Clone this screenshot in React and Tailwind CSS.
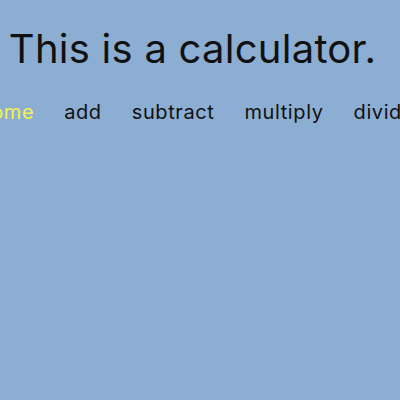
import React from 'react';

const links = ['home', 'add', 'subtract', 'multiply', 'divide'];

const App = () => (
    <div className="min-h-screen w-full overflow-hidden bg-[#8daed3] pr-[15px] font-['Inter',sans-serif] text-[#111]">
        <h1 className="pt-[24px] text-center text-[40px] leading-[50px] tracking-[0.25px] font-normal">
            This is a calculator.
        </h1>
        <nav className="mt-[26px] flex justify-center gap-[30px] whitespace-nowrap pl-[8px] text-[20px] leading-[24px] tracking-[0.6px]">
            {links.map((l, i) => (
                <a key={l} href="#" className={i === 0 ? 'text-[#f3f34b]' : 'text-[#111]'}>
                    {l}
                </a>
            ))}
        </nav>
    </div>
);

export default App;
